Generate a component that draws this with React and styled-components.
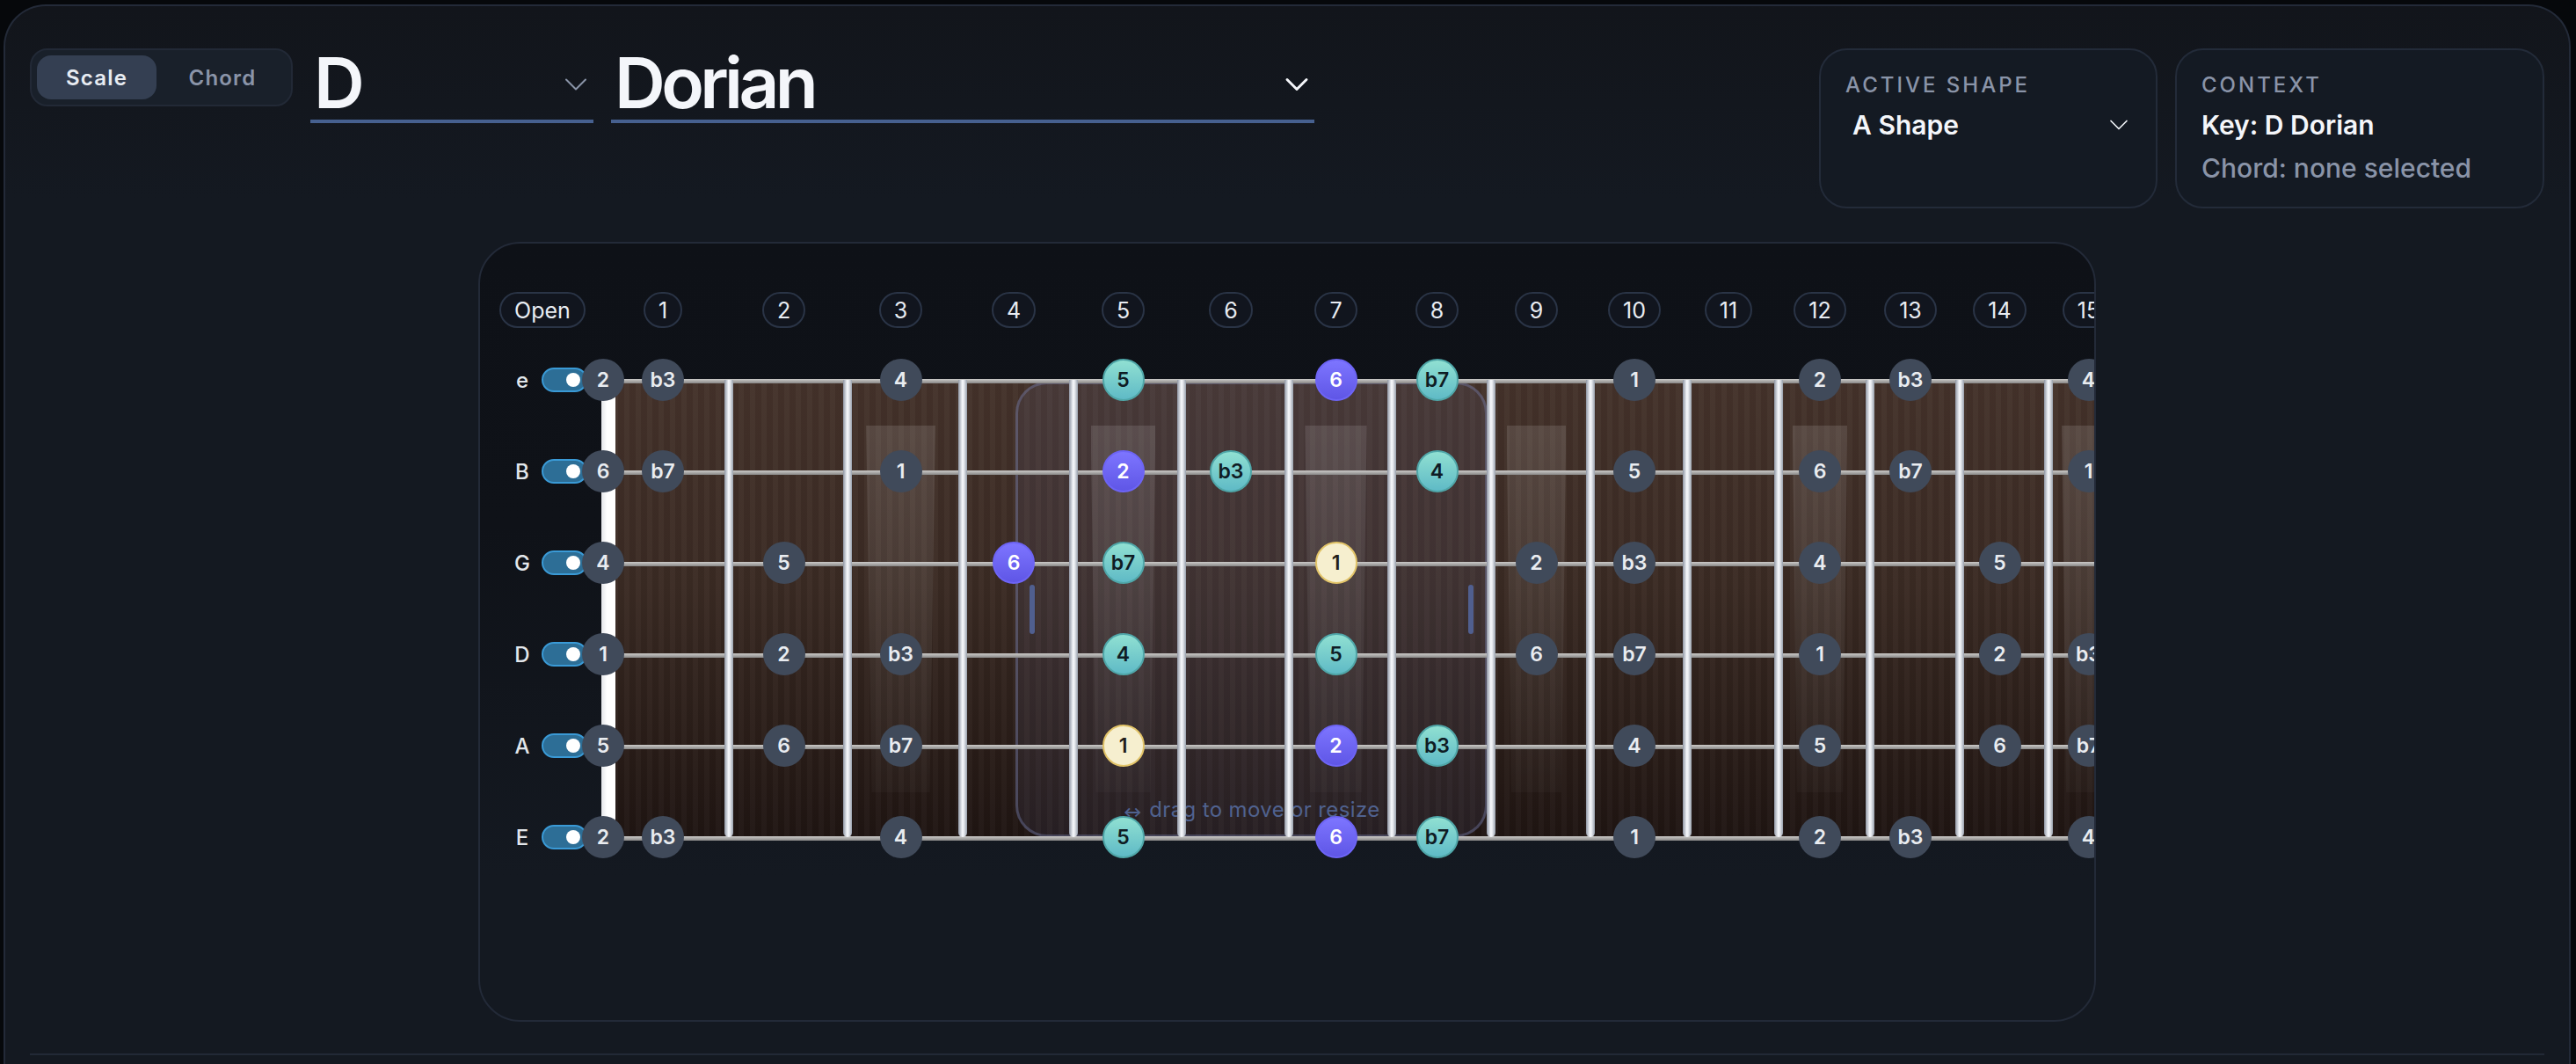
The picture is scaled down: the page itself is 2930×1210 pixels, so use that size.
import React from 'react'
import styled, { createGlobalStyle } from 'styled-components'
import { ChevronDown } from 'lucide-react'

const GlobalStyle = createGlobalStyle`
  html, body {
    margin: 0;
    height: 100%;
    overflow: hidden;
    background: #06080b;
    font-family: Inter, "Noto Sans", sans-serif;
  }
  * {
    box-sizing: border-box;
  }
`

const FRET_WIDTHS = [140, 135, 131, 126, 123, 122, 117, 113, 113, 110, 104, 104, 102, 101, 101]
const INLAYS = [3, 5, 7, 9, 12, 15]
const STRINGS = [
  { name: 'e', open: 2 },
  { name: 'B', open: 9 },
  { name: 'G', open: 5 },
  { name: 'D', open: 0 },
  { name: 'A', open: 7 },
  { name: 'E', open: 2 },
]
const DORIAN = { 0: '1', 2: '2', 3: 'b3', 5: '4', 7: '5', 9: '6', 10: 'b7' }

const noteKind = (label, fret) => {
  if (fret < 4 || fret > 8) return 'plain'
  if (label === '1') return 'root'
  if (label === '2' || label === '6') return 'accent'
  return 'scale'
}

const noteStyles = {
  plain: 'background: #404a5a; color: #e9ecf0;',
  root: 'background: #f6efcf; color: #23201a; border: 2px solid #e2c468;',
  accent: 'background: linear-gradient(180deg, #7d75ff, #5f56e6); color: #fff; border: 2px solid #6d64f5;',
  scale: 'background: linear-gradient(180deg, #90e0d2, #5fbac6); color: #0f1c24; border: 2px solid #4fa6a8;',
}

const Frame = styled.div`
  width: 2920px;
  height: 1205px;
  margin: 5px 0 0 4px;
  padding: 48px 28px 0;
  border: 2px solid #232a38;
  border-bottom: 0;
  border-radius: 48px 48px 0 0;
  overflow: hidden;
  background: linear-gradient(180deg, #12151b 0, #141921 220px);
`

const Header = styled.header`
  display: flex;
  align-items: flex-start;
  gap: 20px;
`

const ModeToggle = styled.div`
  display: flex;
  width: 299px;
  height: 66px;
  padding: 6px;
  border: 2px solid #222936;
  border-radius: 20px;
  background: #19202a;
`

const ModeButton = styled.div`
  flex: none;
  display: flex;
  align-items: center;
  justify-content: center;
  width: ${(props) => (props.$active ? '136px' : '150px')};
  border-radius: 16px;
  font-size: 24px;
  font-weight: 600;
  letter-spacing: 0.05em;
  color: ${(props) => (props.$active ? '#e8ecf2' : '#8a94a8')};
  background: ${(props) => (props.$active ? '#343f52' : 'transparent')};
`

const BigSelect = styled.div`
  display: flex;
  align-items: center;
  justify-content: space-between;
  width: ${(props) => props.$width}px;
  height: 85px;
  padding: 0 0 4px 4px;
  border-bottom: 4px solid #46608f;
  font-size: 80px;
  font-weight: 600;
  line-height: 81px;
  letter-spacing: -0.058em;
  color: #f4f6fa;
`

const BigChevron = styled(ChevronDown)`
  flex: none;
  margin: 4px -2px 0 0;
  color: ${(props) => props.$tone};
`

const SidePanels = styled.div`
  display: flex;
  gap: 20px;
  margin-left: auto;
`

const SidePanel = styled.section`
  width: ${(props) => props.$width}px;
  height: 182px;
  padding: 24px 28px;
  border: 2px solid #232b39;
  border-radius: 32px;
  background: #141a23;
`

const PanelLabel = styled.div`
  font-size: 24px;
  font-weight: 500;
  line-height: 32px;
  letter-spacing: 0.125em;
  color: #8a94a8;
`

const PanelSelect = styled.div`
  display: flex;
  align-items: center;
  justify-content: space-between;
  margin-top: 9px;
  padding: 0 0 0 8px;
  font-size: 30px;
  font-weight: 600;
  line-height: 40px;
  color: #f4f6fa;
`

const PanelChevron = styled(ChevronDown)`
  flex: none;
  margin-right: -4px;
`

const PanelValue = styled.div`
  margin-top: 9px;
  font-size: 30px;
  font-weight: ${(props) => (props.$muted ? 500 : 600)};
  line-height: 40px;
  color: ${(props) => (props.$muted ? '#8a94a8' : '#f4f6fa')};
`

const Card = styled.section`
  width: 1840px;
  height: 887px;
  margin: 38px auto 0;
  padding: 55px 0 0 4px;
  border: 2px solid #232a38;
  border-radius: 48px;
  overflow: hidden;
  background: linear-gradient(180deg, #0e1117 0, #0f1218 320px, #141921 720px);
`

const Neck = styled.div`
  position: relative;
  isolation: isolate;
  display: grid;
  grid-template-columns: 134px ${FRET_WIDTHS.map((w) => `${w}px`).join(' ')};
  grid-template-rows: 48px repeat(6, 104px);
  width: max-content;
`

const FretNumber = styled.div`
  grid-row: 1;
  grid-column: ${(props) => props.$column};
  justify-self: center;
  align-self: start;
  height: 41px;
  padding: 0 15px;
  border: 2px solid #2a3446;
  border-radius: 999px;
  background: #11151e;
  font-size: 25px;
  line-height: 38px;
  white-space: nowrap;
  color: #e8ecf2;
`

const Board = styled.div`
  position: absolute;
  top: 100px;
  left: 134px;
  display: flex;
  height: 521px;
  background:
    repeating-linear-gradient(90deg, rgba(255, 255, 255, 0.022) 0 6px, rgba(0, 0, 0, 0.035) 6px 13px),
    linear-gradient(180deg, #44322a 0, #3a2a23 45%, #1f1512 100%);
`

const FretCell = styled.div`
  position: relative;
  flex: none;
  display: flex;
  align-items: center;
  justify-content: center;
  width: ${(props) => props.$width}px;
`

const FretBar = styled.div`
  position: absolute;
  z-index: 3;
  top: 0;
  bottom: 1px;
  left: 0;
  width: ${(props) => (props.$nut ? 16 : 10)}px;
  border-radius: 0 0 5px 5px;
  background: ${(props) =>
    props.$nut
      ? 'linear-gradient(90deg, #e4e6ea, #fff 40%, #fff)'
      : 'linear-gradient(90deg, #8f96a4, #f2f4f8 45%, #eef0f4 60%, #98a0ac)'};
`

const Inlay = styled.div`
  width: 60%;
  height: 80%;
  clip-path: polygon(0 0, 100% 0, 92% 100%, 8% 100%);
  background: linear-gradient(180deg, rgba(255, 255, 255, 0.12), rgba(255, 255, 255, 0.025));
`

const ShapeOverlay = styled.div`
  position: absolute;
  z-index: 1;
  top: 102px;
  left: 605px;
  display: flex;
  align-items: flex-end;
  justify-content: center;
  width: 537px;
  height: 518px;
  padding-bottom: 10px;
  border: 3px solid rgba(120, 130, 180, 0.38);
  border-radius: 36px;
  background: rgba(120, 130, 190, 0.1);
  font-size: 24px;
  line-height: 32px;
  letter-spacing: 0.015em;
  white-space: nowrap;
  color: #50628f;
`

const DragArrow = styled.span`
  margin-right: 8px;
  font-size: 16px;
  font-weight: 700;
`

const ShapeHandle = styled.div`
  position: absolute;
  top: 50%;
  ${(props) => props.$side}: 13px;
  width: 6px;
  height: 56px;
  margin-top: -28px;
  border-radius: 3px;
  background: #505f8f;
`

const StringLine = styled.div`
  z-index: 2;
  grid-column: 2 / -1;
  grid-row: ${(props) => props.$row};
  align-self: center;
  height: 5px;
  margin-top: 3px;
  background: linear-gradient(180deg, #cbcac8, #a4a3a2 60%, #858585);
`

const StringHead = styled.div`
  grid-column: 1;
  grid-row: ${(props) => props.$row};
  display: flex;
  align-items: center;
  padding-left: 32px;
`

const StringName = styled.span`
  flex: none;
  width: 24px;
  font-size: 24px;
  font-weight: 500;
  text-align: center;
  color: #e2e6ea;
`

const MuteSwitch = styled.div`
  position: relative;
  flex: none;
  width: 52px;
  height: 28px;
  margin-left: 10px;
  border: 2px solid #3a9ad6;
  border-radius: 14px;
  background: #2d6e96;
  &::after {
    content: '';
    position: absolute;
    top: 4px;
    right: 6px;
    width: 16px;
    height: 16px;
    border-radius: 50%;
    background: #fff;
  }
`

const Note = styled.div`
  position: relative;
  z-index: 4;
  flex: none;
  display: flex;
  align-items: center;
  justify-content: center;
  width: 48px;
  height: 48px;
  border-radius: 50%;
  font-size: 23px;
  font-weight: 600;
  ${(props) => noteStyles[props.$kind]}
  ${(props) => props.$fret && `
    grid-column: ${props.$fret + 1};
    grid-row: ${props.$row};
    justify-self: center;
    align-self: center;
  `}
`

const OpenNote = styled(Note)`
  margin-left: -6px;
`

const Divider = styled.hr`
  height: 2px;
  margin: 36px 0 0;
  border: 0;
  background: #222936;
`

const Fretboard = () => (
  <Card>
    <Neck>
      <FretNumber $column={1}>Open</FretNumber>
      {FRET_WIDTHS.map((_, i) => (
        <FretNumber key={i} $column={i + 2}>
          {i + 1}
        </FretNumber>
      ))}

      <Board>
        {FRET_WIDTHS.map((w, i) => (
          <FretCell key={i} $width={w}>
            <FretBar $nut={i === 0} />
            {INLAYS.includes(i + 1) && <Inlay />}
          </FretCell>
        ))}
      </Board>

      <ShapeOverlay>
        <ShapeHandle $side="left" />
        <span>
          <DragArrow>↔</DragArrow>drag to move or resize
        </span>
        <ShapeHandle $side="right" />
      </ShapeOverlay>

      {STRINGS.map((s, row) => (
        <React.Fragment key={s.name + row}>
          <StringLine $row={row + 2} />
          <StringHead $row={row + 2}>
            <StringName>{s.name}</StringName>
            <MuteSwitch />
            <OpenNote $kind="plain">{DORIAN[s.open]}</OpenNote>
          </StringHead>
          {FRET_WIDTHS.map((_, i) => {
            const fret = i + 1
            const label = DORIAN[(s.open + fret) % 12]
            if (!label) return null
            return (
              <Note key={fret} $fret={fret} $row={row + 2} $kind={noteKind(label, fret)}>
                {label}
              </Note>
            )
          })}
        </React.Fragment>
      ))}
    </Neck>
  </Card>
)

export default function App() {
  return (
    <>
      <GlobalStyle />
      <Frame>
        <Header>
          <ModeToggle>
            <ModeButton $active>Scale</ModeButton>
            <ModeButton>Chord</ModeButton>
          </ModeToggle>
          <BigSelect $width={322}>
            D
            <BigChevron $tone="#8a94a8" size={44} strokeWidth={1.1} />
          </BigSelect>
          <BigSelect $width={800}>
            Dorian
            <BigChevron $tone="#f4f6fa" size={44} strokeWidth={1.6} />
          </BigSelect>
          <SidePanels>
            <SidePanel $width={385}>
              <PanelLabel>ACTIVE SHAPE</PanelLabel>
              <PanelSelect>
                A Shape
                <PanelChevron size={36} strokeWidth={1.1} color="#f4f6fa" />
              </PanelSelect>
            </SidePanel>
            <SidePanel $width={420}>
              <PanelLabel>CONTEXT</PanelLabel>
              <PanelValue>Key: D Dorian</PanelValue>
              <PanelValue $muted>Chord: none selected</PanelValue>
            </SidePanel>
          </SidePanels>
        </Header>
        <Fretboard />
        <Divider />
      </Frame>
    </>
  )
}
